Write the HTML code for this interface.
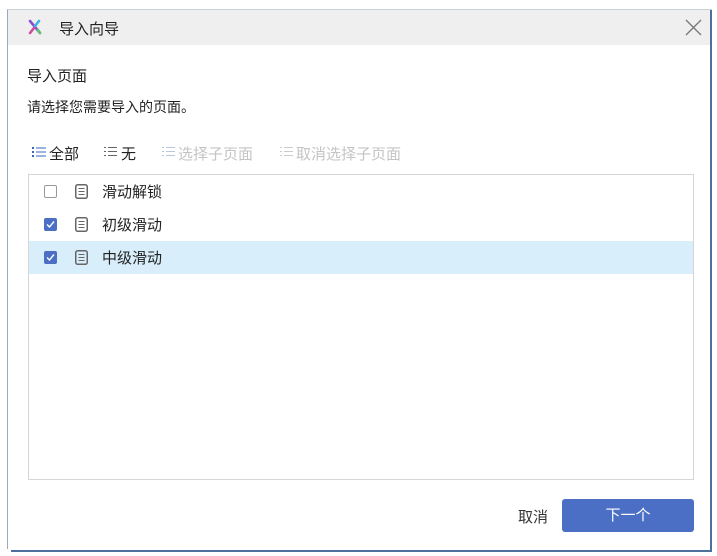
<!DOCTYPE html>
<html><head><meta charset="utf-8"><style>
*{margin:0;padding:0;box-sizing:border-box}
body{width:717px;height:556px;background:#fff;position:relative;overflow:hidden;font-family:"Liberation Sans","Noto Sans CJK SC",sans-serif;color:#222}
.win{position:absolute;left:7px;top:9px;width:705px;height:540px;border-left:1px solid #9aaabb;border-top:1px solid #c8d0d8;background:#fff}
.rb{position:absolute;left:710px;top:10px;width:2px;height:542px;background:#4d6f9e}
.bb{position:absolute;left:11px;top:550px;width:701px;height:2px;background:#4d6f9e}
.title{position:absolute;left:0;top:0;width:704px;height:35px;background:#efefef}
.title span{position:absolute;left:51px;top:8px;font-size:15px;color:#222}
.t{position:absolute;font-size:14px;color:#222}
.tb{position:absolute;top:143px;font-size:15px}
.list{position:absolute;left:28px;top:174px;width:666px;height:306px;border:1px solid #d6d6d6}
.row{position:absolute;left:0;width:664px;height:33px}
.row .cb{position:absolute;left:15px;top:10px;width:13px;height:13px;border-radius:2px}
.row .nm{position:absolute;left:73px;top:6px;font-size:15px;color:#222}
.row svg.d{position:absolute;left:46px;top:9px}
.btn{position:absolute;left:562px;top:499px;width:132px;height:33px;background:#4a6fc4;border-radius:3px;color:#fff;font-size:15px;text-align:center;line-height:33px}
</style></head><body>
<div class="win">
 <div class="title">
  <svg style="position:absolute;left:19px;top:9px" width="16" height="16" viewBox="0 0 16 16">
   <path d="M3 2 L13 14" stroke="#8a4fd0" stroke-width="2.6" stroke-linecap="round"/>
   <path d="M12 2 L8 7" stroke="#3db3e0" stroke-width="2.6" stroke-linecap="round"/>
   <path d="M7 9 L3 14" stroke="#d04aa0" stroke-width="2.6" stroke-linecap="round"/>
   <path d="M11 11 L13 14" stroke="#5ec46a" stroke-width="2.6" stroke-linecap="round"/>
  </svg>
  <span>导入向导</span>
  <svg style="position:absolute;left:677px;top:9px" width="17" height="17" viewBox="0 0 17 17"><path d="M1 1L16 16M16 1L1 16" stroke="#777" stroke-width="1.3"/></svg>
 </div>
</div>
<div class="rb"></div><div class="bb"></div>
<div class="t" style="left:27px;top:65px;font-size:15px">导入页面</div>
<div class="t" style="left:27px;top:97px">请选择您需要导入的页面。</div>

<svg style="position:absolute;left:32px;top:146px" width="14" height="12" viewBox="0 0 14 12"><g fill="#3a66c0"><rect x="0" y="1" width="2" height="2"/><rect x="0" y="5" width="2" height="2"/><rect x="0" y="9" width="2" height="2"/><rect x="4" y="1.5" width="10" height="1"/><rect x="4" y="5.5" width="10" height="1"/><rect x="4" y="9.5" width="10" height="1"/></g></svg>
<div class="tb" style="left:49px;color:#222">全部</div>
<svg style="position:absolute;left:104px;top:146px" width="14" height="12" viewBox="0 0 14 12"><g fill="#666"><rect x="0" y="1" width="2" height="1"/><rect x="0" y="5" width="2" height="1"/><rect x="0" y="9" width="2" height="1"/><rect x="4" y="1" width="9" height="1"/><rect x="4" y="5" width="9" height="1"/><rect x="4" y="9" width="9" height="1"/></g></svg>
<div class="tb" style="left:121px;color:#222">无</div>
<svg style="position:absolute;left:162px;top:146px" width="14" height="12" viewBox="0 0 14 12"><g fill="#b8c6e0"><rect x="0" y="1" width="2" height="1"/><rect x="0" y="5" width="2" height="1"/><rect x="0" y="9" width="2" height="1"/><rect x="4" y="1" width="9" height="1"/><rect x="4" y="5" width="9" height="1"/><rect x="4" y="9" width="9" height="1"/></g></svg>
<div class="tb" style="left:178px;color:#c4c4c4">选择子页面</div>
<svg style="position:absolute;left:280px;top:146px" width="14" height="12" viewBox="0 0 14 12"><g fill="#ccc"><rect x="0" y="1" width="2" height="1"/><rect x="0" y="5" width="2" height="1"/><rect x="0" y="9" width="2" height="1"/><rect x="4" y="1" width="9" height="1"/><rect x="4" y="5" width="9" height="1"/><rect x="4" y="9" width="9" height="1"/></g></svg>
<div class="tb" style="left:296px;color:#c4c4c4">取消选择子页面</div>

<div class="list">
 <div class="row" style="top:0">
  <div class="cb" style="border:1px solid #999;background:#fff"></div>
  <svg class="d" width="13" height="15" viewBox="0 0 13 15"><rect x="0.75" y="0.75" width="11.5" height="13.5" rx="2" fill="none" stroke="#666" stroke-width="1.5"/><path d="M3.5 4.5H9.5M3.5 7.5H9.5M3.5 10.5H9.5" stroke="#666" stroke-width="1"/></svg>
  <div class="nm">滑动解锁</div>
 </div>
 <div class="row" style="top:33px">
  <div class="cb" style="background:#4a6fc4"><svg width="13" height="13" viewBox="0 0 13 13"><path d="M3 6.5L5.5 9L10 3.5" fill="none" stroke="#fff" stroke-width="1.4"/></svg></div>
  <svg class="d" width="13" height="15" viewBox="0 0 13 15"><rect x="0.75" y="0.75" width="11.5" height="13.5" rx="2" fill="none" stroke="#666" stroke-width="1.5"/><path d="M3.5 4.5H9.5M3.5 7.5H9.5M3.5 10.5H9.5" stroke="#666" stroke-width="1"/></svg>
  <div class="nm">初级滑动</div>
 </div>
 <div class="row" style="top:66px;background:#d8eefa">
  <div class="cb" style="background:#4a6fc4"><svg width="13" height="13" viewBox="0 0 13 13"><path d="M3 6.5L5.5 9L10 3.5" fill="none" stroke="#fff" stroke-width="1.4"/></svg></div>
  <svg class="d" width="13" height="15" viewBox="0 0 13 15"><rect x="0.75" y="0.75" width="11.5" height="13.5" rx="2" fill="none" stroke="#666" stroke-width="1.5"/><path d="M3.5 4.5H9.5M3.5 7.5H9.5M3.5 10.5H9.5" stroke="#666" stroke-width="1"/></svg>
  <div class="nm">中级滑动</div>
 </div>
</div>
<div style="position:absolute;left:518px;top:506px;font-size:15px;color:#333">取消</div>
<div class="btn">下一个</div>
</body></html>
